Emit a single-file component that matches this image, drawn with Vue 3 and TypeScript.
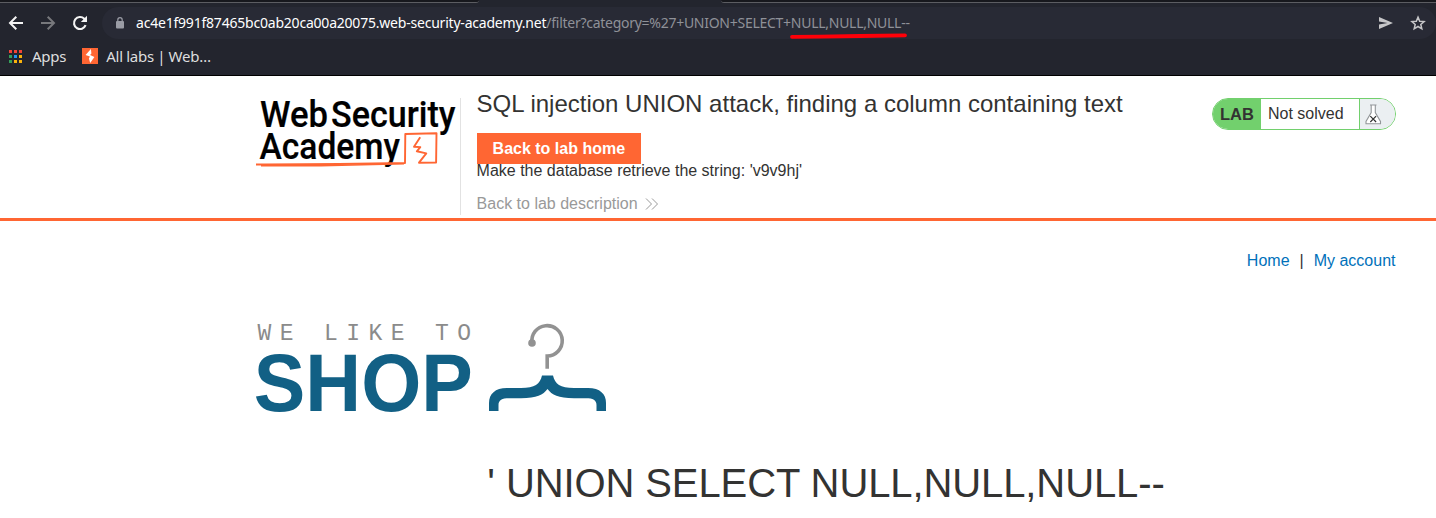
<script setup lang="ts">
const host = 'ac4e1f991f87465bc0ab20ca00a20075.web-security-academy.net'
const path = '/filter?category=%27+UNION+SELECT+NULL,NULL,NULL--'
const appColors: string[] = [
  '#f44336', '#f44336', '#f44336',
  '#34a05a', '#2196f3', '#fbb30c',
  '#34a05a', '#fbb30c', '#fbb30c',
]
</script>

<template>
  <div class="window">
    <div class="browser">
      <div class="tabs">
        <span class="tab left"></span>
        <span class="gap"></span>
        <span class="tab right"></span>
      </div>
      <div class="toolbar">
        <svg class="nav" width="16" height="16" viewBox="0 0 16 16">
          <path d="M15 8H2.5M8.3 1.7L2 8l6.3 6.3" fill="none" stroke="#f4f4f4" stroke-width="2" />
        </svg>
        <svg class="nav" width="16" height="16" viewBox="0 0 16 16">
          <path d="M1 8h12.5M7.7 1.7L14 8l-6.3 6.3" fill="none" stroke="#77787c" stroke-width="2" />
        </svg>
        <svg class="nav" width="16" height="16" viewBox="0 0 16 16">
          <path d="M13.6 10.2A6 6 0 1 1 12.3 3.8L13.5 5" fill="none" stroke="#f4f4f4" stroke-width="2.1" />
          <path d="M15 .8V7H8.8z" fill="#f4f4f4" />
        </svg>
        <div class="address">
          <svg class="lock" width="8" height="12" viewBox="0 0 8 12">
            <rect y="4" width="8" height="7.5" rx="1" fill="#9a9ca5" />
            <path d="M1.8 5V2.9a2.2 2.2 0 0 1 4.4 0V5" fill="none" stroke="#9a9ca5" stroke-width="1.2" />
          </svg>
          <span class="url">{{ host }}<span class="path">{{ path }}</span></span>
          <svg class="mark" width="118" height="6" viewBox="0 0 118 6">
            <path d="M2 3.8L30 3.6 70 3 115 2.4" fill="none" stroke="#ff0008" stroke-width="3.8" stroke-linecap="round" />
          </svg>
          <svg class="send" width="14" height="12" viewBox="0 0 14 12">
            <path d="M0 0L14 6 0 12V7.4L8.5 6 0 4.6z" fill="#c6c6c8" />
          </svg>
          <svg class="star" width="16" height="16" viewBox="0 0 16 16">
            <path d="M8 2.1l1.7 4.1 4.4.4-3.3 2.9 1 4.3L8 11.5l-3.8 2.3 1-4.3-3.3-2.9 4.4-.4z" fill="none" stroke="#c6c6c8" stroke-width="1.5" />
          </svg>
        </div>
      </div>
      <div class="bookmarks">
        <div class="apps"><i v-for="(color, i) in appColors" :key="i" :style="{ background: color }"></i></div>
        <span class="apps-label">Apps</span>
        <svg class="favicon" width="16" height="16" viewBox="0 0 16 16">
          <rect width="16" height="16" fill="#ff6633" />
          <path d="M8.9 1L3.6 6.9l4.3 1.7-1 1.8L8.2 15l4.2-6.1-4.3-1.8 1.3-1.7z" fill="#fff" />
        </svg>
        <span class="labs-label">All labs | Web…</span>
      </div>
    </div>

    <header class="lab-header">
      <div class="logo">
        <svg width="204" height="90" viewBox="0 0 204 90">
          <g font-family="Roboto, sans-serif" font-weight="500" font-size="37.5" fill="#000" stroke="#000" stroke-width=".2">
            <text x="4" y="35.6" textLength="68" lengthAdjust="spacingAndGlyphs">Web</text>
            <text x="75" y="35.6" textLength="124.5" lengthAdjust="spacingAndGlyphs">Security</text>
            <text x="3.5" y="68.2" textLength="140.5" lengthAdjust="spacingAndGlyphs">Academy</text>
          </g>
          <g fill="none" stroke="#ff6633" stroke-linejoin="round">
            <path d="M0 73.5C32 73.4 80 73.4 149 72L149.3 43 180.5 42.2 180.1 71.6 163 71.7 170.3 62.4 160.8 60.3 164.3 56.1 158 55.8 164.2 46.3" stroke-width="1.9" />
            <path d="M5 74.7L65 74.7 148 72.8" stroke-width="1.6" />
          </g>
        </svg>
      </div>
      <div class="details">
        <h2>SQL injection UNION attack, finding a column containing text</h2>
        <a class="button">Back to lab home</a>
        <p>Make the database retrieve the string: 'v9v9hj'</p>
        <a class="description">Back to lab description
          <svg width="14" height="12" viewBox="0 0 14 12"><path d="M1 .5L6.5 6 1 11.5M7 .5L12.5 6 7 11.5" fill="none" stroke="#999" stroke-width="1" /></svg>
        </a>
      </div>
      <div class="status">
        <b>LAB</b><span>Not solved</span>
        <div class="flask">
          <svg width="17" height="21" viewBox="0 0 17 21">
            <path d="M5 1H11.5M6.2 1V8.500L1 17.500V19.800H15.500V17.500L10.300 8.500V1" fill="#fff" stroke="#929699" stroke-width="1.1" />
            <path d="M5.3 12.2l5.8 5.800M11.100 12.2l-5.800 5.800" stroke="#333" stroke-width="1.2" />
          </svg>
        </div>
      </div>
    </header>

    <main>
      <nav><a>Home</a><span>|</span><a>My account</a></nav>
      <svg class="shop" width="360" height="100" viewBox="0 0 360 100">
        <text class="tagline" x="1.6" y="22.8">WE LIKE TO</text>
        <text x="-2.2" y="93.5" class="big" textLength="219" lengthAdjust="spacingAndGlyphs">SHOP</text>
        <circle cx="276" cy="26" r="3.8" fill="#929292" />
        <path d="M276 26A15.2 15.2 0 1 1 291.2 39V51.8" fill="none" stroke="#929292" stroke-width="3.6" />
        <path d="M286 58.5H297C299 67 304 71 318 71H332C344 71 350 77 350 86V94H340.5V88C340.5 83 337 81.2 330 81.2H318C302 81.2 296 78 291.5 72C287 78 281 81.2 265 81.2H253C246 81.2 242.5 83 242.5 88V94H233V86C233 77 239 71 251 71H265C279 71 284 67 286 58.5Z" fill="#126085" />
      </svg>
      <h1>' UNION SELECT NULL,NULL,NULL--</h1>
    </main>
  </div>
</template>

<style>
body { margin: 0; background: #fff; overflow: hidden; }
</style>

<style scoped>
.window { width: 1436px; height: 518px; overflow: hidden; background: #fff; color: #333332; font: 16px "Liberation Sans", Arial, sans-serif; }
.browser { height: 76px; box-sizing: border-box; background: #23252e; border-bottom: 1px solid #000; font-family: "Noto Sans", sans-serif; }
.tabs { display: flex; height: 3px; background: #23252e; }
.tab { box-sizing: border-box; background: #17181d; border-bottom: 1px solid #5c5d62; }
.left { width: 479px; border-radius: 0 0 5px 0; }
.gap { width: 242px; }
.right { flex: 1; border-radius: 0 0 0 5px; }
.toolbar { display: flex; align-items: center; height: 32px; margin-top: 4px; }
.nav { flex: none; margin-left: 8px; margin-right: 8px; }
.address { position: relative; display: flex; align-items: center; width: 1334px; height: 32px; margin-left: 6px; border-radius: 16px; background: #282a35; }
.lock { margin-left: 14px; margin-top: -1px; }
.url { margin-left: 12px; font-size: 14px; line-height: 20px; letter-spacing: -0.21px; color: #fff; white-space: nowrap; }
.path { color: #8f9198; letter-spacing: -0.27px; }
.mark { position: absolute; left: 688px; top: 26px; }
.send { margin-left: auto; }
.star { margin-left: 17px; margin-right: 10px; }
.bookmarks { display: flex; align-items: center; height: 34px; padding-left: 9px; font-size: 15px; color: #dedede; }
.apps { display: grid; grid-template-columns: repeat(3, 3px); gap: 2px; }
.apps i { width: 3px; height: 3px; }
.apps-label { margin-left: 10px; letter-spacing: -0.25px; }
.favicon { margin-left: 16px; }
.labs-label { margin-left: 8px; letter-spacing: -0.25px; word-spacing: -0.3px; }
.lab-header { display: flex; box-sizing: border-box; height: 145px; padding: 0 40px 0 256px; border-bottom: 3px solid #ff6633; }
.logo { width: 204px; height: 117px; margin-top: 22px; border-right: 1px solid #e2e2e2; }
.logo svg { display: block; margin-top: -7px; overflow: visible; }
.details { padding: 13px 0 0 15.6px; display: flex; flex-direction: column; align-items: flex-start; }
h2 { margin: 0; font-size: 24px; font-weight: 400; line-height: 30px; }
.button { margin-top: 14px; padding: 0 16px; height: 31px; line-height: 31px; background: #ff6633; color: #fff; font-weight: 700; }
p { margin: 0; line-height: 18px; margin-top: -2px; }
.description { margin-top: 15px; line-height: 18px; color: #999; display: flex; align-items: center; gap: 7.5px; }
.status { display: flex; box-sizing: border-box; width: 184px; height: 32px; margin: 22px 0 0 auto; border: 1px solid #72d06d; border-radius: 16px; overflow: hidden; line-height: 30px; }
.status b { width: 48px; background: #72d06d; text-align: center; font-size: 16.5px; line-height: 30px; }
.status span { width: 91px; padding-left: 7px; }
.flask { flex: 1; display: flex; align-items: center; padding-left: 4.5px; border-left: 1px solid #72d06d; background: #ebeff2; }
main { padding: 30px 40px 0 256px; }
nav { display: flex; justify-content: flex-end; line-height: 20px; padding-right: 0.5px; }
nav a { color: #0071ba; }
nav span { margin: 0 10px; }
.shop { display: block; margin-top: 46px; overflow: visible; }
.tagline { font: 23px "Liberation Mono", monospace; letter-spacing: 8.37px; fill: #8b8b8b; }
.big { font: 700 82px "Liberation Sans", Arial, sans-serif; fill: #126085; }
h1 { margin: 41px 0 0; font-size: 40px; line-height: 50px; font-weight: 400; text-align: center; letter-spacing: -0.1px; }
</style>
